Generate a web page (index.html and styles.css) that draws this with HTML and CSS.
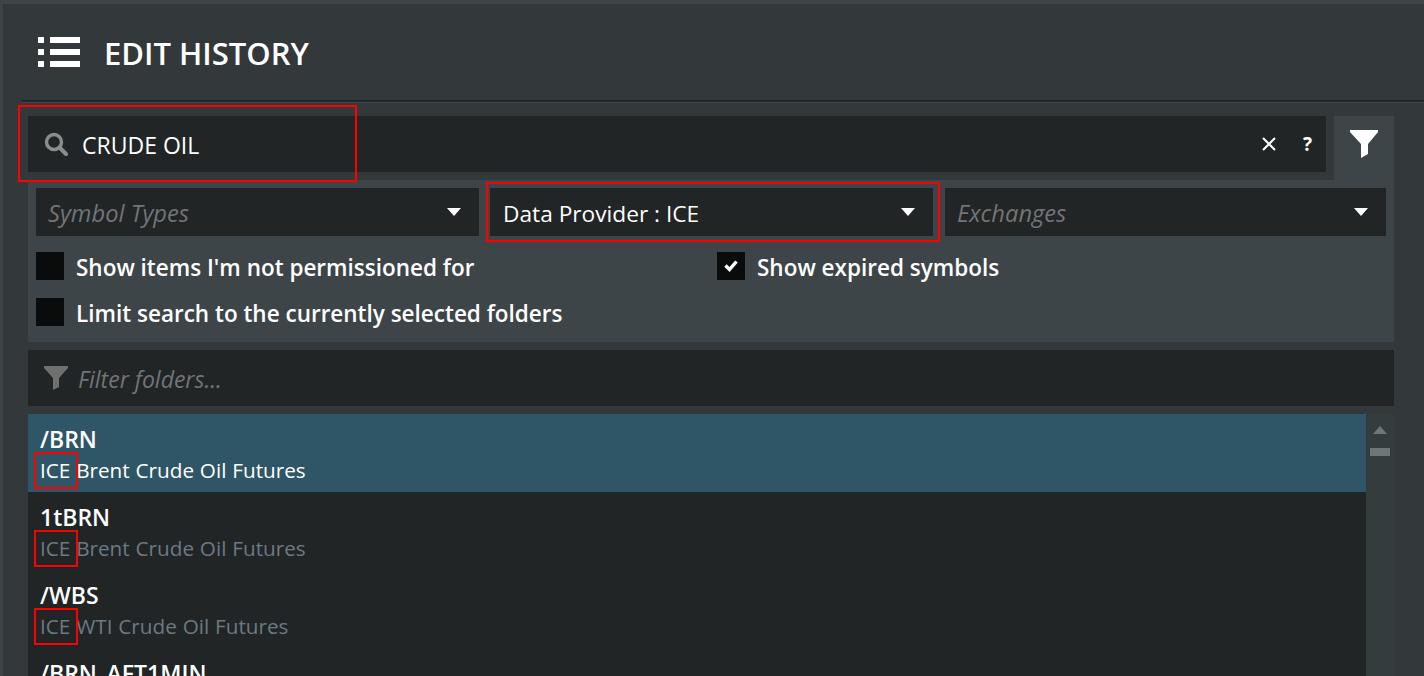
FILE: index.html
```html
<!DOCTYPE html>
<html lang="en">
<head>
    <meta charset="UTF-8">
    <title>Edit History</title>
    <link rel="stylesheet" href="styles.css">
</head>
<body>
    <div class="window">
        <div class="header">
            <svg class="header-icon" width="42" height="30" viewBox="0 0 42 30" fill="#fff">
                <rect x="0" y="0" width="6" height="6"/>
                <rect x="12" y="0" width="30" height="6"/>
                <rect x="0" y="12" width="6" height="6"/>
                <rect x="12" y="12" width="30" height="6"/>
                <rect x="0" y="24" width="6" height="6"/>
                <rect x="12" y="24" width="30" height="6"/>
            </svg>
            <div class="title">EDIT HISTORY</div>
        </div>
        <div class="rule"></div>

        <div class="content">
            <div class="search-row">
                <div class="search">
                    <svg class="search-icon" width="24" height="24" viewBox="0 0 24 24" fill="none" stroke="#8b8d8d">
                        <circle cx="10" cy="10" r="7.5" stroke-width="3.4"/>
                        <path d="M15.5 15.5 L22 22" stroke-width="4" stroke-linecap="round"/>
                    </svg>
                    <span class="search-text">CRUDE OIL</span>
                    <svg class="search-clear" width="14" height="14" viewBox="0 0 14 14" fill="none" stroke="#fff" stroke-width="2">
                        <path d="M1 1 L13 13 M13 1 L1 13"/>
                    </svg>
                    <span class="search-help">?</span>
                </div>
                <div class="filter-tab">
                    <svg width="28" height="28" viewBox="0 0 28 28" fill="#fff">
                        <path d="M0 0 H28 V2 L18 14 V24 L11 28 V14 L0 2 Z"/>
                    </svg>
                </div>
            </div>

            <div class="panel">
                <div class="dropdowns">
                    <div class="dropdown placeholder">Symbol Types<span class="caret"></span></div>
                    <div class="dropdown">Data Provider : ICE<span class="caret"></span></div>
                    <div class="dropdown placeholder">Exchanges<span class="caret"></span></div>
                </div>
                <div class="options">
                    <div class="option"><span class="checkbox"></span>Show items I'm not permissioned for</div>
                    <div class="option">
                        <span class="checkbox">
                            <svg width="14" height="12" viewBox="0 0 14 12" fill="none" stroke="#fff" stroke-width="3.400">
                                <path d="M1.500 5.500 L5.500 9.500 L12.500 1.500"/>
                            </svg>
                        </span>Show expired symbols
                    </div>
                    <div class="option"><span class="checkbox"></span>Limit search to the currently selected folders</div>
                </div>
            </div>

            <div class="folder-filter">
                <svg width="24" height="24" viewBox="0 0 24 24" fill="#6f7171">
                    <path d="M0 0 H24 V2 L15 12 V21 L9 24 V12 L0 2 Z"/>
                </svg>
                <span class="folder-filter-text">Filter folders...</span>
            </div>

            <div class="list-wrap">
                <div class="list">
                    <div class="row selected">
                        <div class="row-name">/BRN</div>
                        <div class="row-desc">ICE Brent Crude Oil Futures</div>
                    </div>
                    <div class="row">
                        <div class="row-name">1tBRN</div>
                        <div class="row-desc">ICE Brent Crude Oil Futures</div>
                    </div>
                    <div class="row">
                        <div class="row-name">/WBS</div>
                        <div class="row-desc">ICE WTI Crude Oil Futures</div>
                    </div>
                    <div class="row">
                        <div class="row-name">/BRN_AFT1MIN</div>
                    </div>
                </div>
                <div class="scrollbar">
                    <div class="scroll-up"></div>
                    <div class="scroll-thumb"></div>
                </div>
            </div>
        </div>

        <div class="mark mark-search"></div>
        <div class="mark mark-provider"></div>
        <div class="mark mark-ice1"></div>
        <div class="mark mark-ice2"></div>
        <div class="mark mark-ice3"></div>
    </div>
</body>
</html>
```

FILE: styles.css
```css
html, body {
    margin: 0;
    height: 100%;
    overflow: hidden;
}

body {
    background-color: #33383b;
    font-family: "Open Sans", "Noto Sans", sans-serif;
    color: #fff;
}

.window {
    position: relative;
    height: 672px;
    border-top: 4px solid #3e4448;
    border-left: 3px solid #3e4448;
    overflow: hidden;
}

.header {
    display: flex;
    align-items: center;
    height: 96px;
    padding-left: 35px;
}

.header-icon {
    margin-right: 24px;
}

.title {
    padding-top: 2px;
    font-size: 31px;
    font-weight: 600;
}

.rule {
    height: 2px;
    margin-left: 19px;
    background-color: #212526;
    border-bottom: 1px solid #43494d;
}

.content {
    padding: 13px 30px 0 25px;
}

.search-row {
    display: flex;
    height: 64px;
}

.search {
    flex: 1;
    display: flex;
    align-items: center;
    height: 56px;
    padding: 0 12px 0 16px;
    background-color: #212526;
    font-size: 23px;
}

.search-icon {
    margin-right: 14px;
}

.search-text {
    flex: 1;
    padding-top: 2px;
}

.search-clear {
    margin-right: 27px;
}

.search-help {
    font-size: 19px;
    font-weight: 700;
    margin-right: 2px;
}

.filter-tab {
    width: 60px;
    margin-left: 8px;
    padding-top: 14px;
    box-sizing: border-box;
    text-align: center;
    background-color: #3e4549;
}

.panel {
    height: 162px;
    box-sizing: border-box;
    padding: 8px;
    background-color: #3e4549;
}

.dropdowns {
    display: flex;
    gap: 11px;
}

.dropdown {
    position: relative;
    width: 443px;
    box-sizing: border-box;
    height: 48px;
    line-height: 52px;
    padding-left: 13px;
    background-color: #212526;
    font-size: 22.700px;
}

.dropdown:last-child {
    width: 441px;
    margin-left: 1px;
}

.placeholder {
    padding-left: 12px;
    line-height: 50px;
    font-size: 23.700px;
    font-style: italic;
    color: #727475;
}

.caret {
    position: absolute;
    right: 18px;
    top: 20px;
    border-left: 7px solid transparent;
    border-right: 7px solid transparent;
    border-top: 8px solid #fff;
}

.options {
    display: grid;
    grid-template-columns: 681px 1fr;
    row-gap: 18px;
    margin-top: 16px;
}

.option {
    display: flex;
    align-items: flex-start;
    height: 28px;
    line-height: 32px;
    font-size: 22.500px;
    font-weight: 600;
    white-space: nowrap;
}

.checkbox {
    display: flex;
    align-items: center;
    justify-content: center;
    flex-shrink: 0;
    width: 28px;
    height: 28px;
    margin-right: 12px;
    background-color: #0a0b0b;
}

.folder-filter {
    display: flex;
    align-items: center;
    height: 56px;
    margin-top: 8px;
    padding-left: 16px;
    background-color: #212526;
}

.folder-filter-text {
    margin-left: 10px;
    padding-top: 1px;
    font-size: 23px;
    font-style: italic;
    color: #727475;
}

.list-wrap {
    display: flex;
    margin-top: 8px;
}

.list {
    flex: 1;
    background-color: #212526;
}

.row {
    height: 78px;
    box-sizing: border-box;
    padding: 9px 0 0 12px;
}

.row.selected {
    background-color: #2f5666;
}

.row-name {
    font-size: 23px;
    font-weight: 600;
    line-height: 32px;
}

.row-desc {
    font-size: 20.700px;
    word-spacing: 0.500px;
    line-height: 30px;
    color: #6c7a82;
}

.selected .row-desc {
    color: #fff;
}

.scrollbar {
    width: 28px;
    padding-top: 12px;
    box-sizing: border-box;
    background-color: #343c3e;
}

.scroll-up {
    width: 0;
    margin: 0 auto;
    border-left: 7px solid transparent;
    border-right: 7px solid transparent;
    border-bottom: 8px solid #6f7678;
}

.scroll-thumb {
    width: 20px;
    height: 8px;
    margin: 14px auto 0;
    background-color: #6f7678;
}

/* red annotation boxes on top of the screenshot */
.mark {
    position: absolute;
    box-sizing: border-box;
    border: 2px solid #f00;
}

.mark-search {
    left: 15px;
    top: 101px;
    width: 339px;
    height: 77px;
}

.mark-provider {
    left: 483px;
    top: 178px;
    width: 454px;
    height: 60px;
}

.mark-ice1, .mark-ice2, .mark-ice3 {
    left: 31px;
    width: 44px;
    height: 37px;
}

.mark-ice1 { top: 448px; }
.mark-ice2 { top: 526px; }
.mark-ice3 { top: 604px; }
```
